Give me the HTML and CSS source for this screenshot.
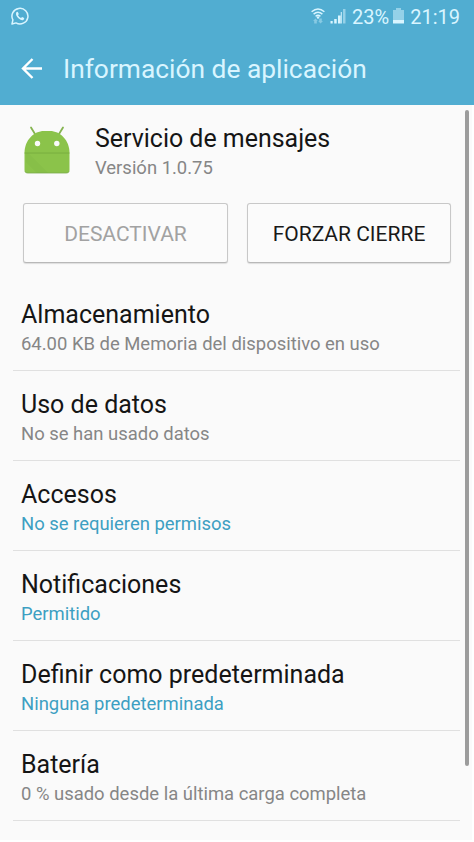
FILE: index.html
```html
<!DOCTYPE html>
<html lang="es">
<head>
<meta charset="utf-8">
<title>Información de aplicación</title>
<link rel="stylesheet" href="styles.css">
</head>
<body>
<div class="screen">
  <header class="header">
    <div class="status">
      <svg class="whatsapp" width="18" height="18" viewBox="0 0 18 18">
        <path d="M1 17L1.900 12.800A8 7.800 0 1 1 5 15.900Z" fill="none" stroke="currentColor" stroke-width="1.5" stroke-linejoin="round"/>
        <path d="M5.2 5.6Q6 4.5 6.8 4.9L7.8 7.1L7 8.3Q8 10.2 10 11L11.1 10L13.2 11Q13.4 12.3 12.2 13Q10.5 13.8 7.7 11.6Q4.2 8.6 5.2 5.6Z" fill="currentColor"/>
      </svg>
      <div class="indicators">
        <svg class="wifi" width="14" height="17" viewBox="0 0 14 17">
          <g fill="none" stroke="currentColor" stroke-width="1.4">
            <path d="M.6 3.700Q7-1.700 13.400 3.700"/>
            <path d="M2.600 6.100Q7 2.300 11.400 6.100"/>
            <path d="M4.600 8.400Q7 6.300 9.400 8.400"/>
          </g>
          <circle cx="7" cy="9.500" r="1.200" fill="currentColor"/>
          <path d="M4.500 10.500L6.800 13H5.800V15.500H3.200V13H2ZM9.500 15.500L7.200 13H8.200V10.500H10.800V13H12Z" fill="currentColor" opacity=".4"/>
        </svg>
        <svg class="signal" width="16" height="16" viewBox="0 0 16 16" fill="currentColor">
          <path d="M.5 13H2.700V15.500H.5ZM4.200 11H6.700V15.500H4.200ZM8 7.500H10.700V15.500H8Z"/>
          <path d="M10.700 4H12V15.500H10.700Z" opacity=".75"/>
          <path d="M13 1H15.500V15.500H13Z" opacity=".5"/>
        </svg>
        <span class="percent">23%</span>
        <svg class="battery" width="11" height="16" viewBox="0 0 11 16" fill="currentColor">
          <path d="M0 2H3V0H8V2H11V12H0Z" opacity=".5"/>
          <path d="M0 12H11V15.5H0Z"/>
        </svg>
        <span class="clock">21:19</span>
      </div>
    </div>
    <div class="toolbar">
      <svg class="back" width="22" height="21" viewBox="0 0 22 21" fill="none" stroke="currentColor" stroke-width="2.4">
        <path d="M11.5 1L2 10.5L11.5 20M2 10.5H21"/>
      </svg>
      <h1 class="heading">Información de aplicación</h1>
    </div>
  </header>
  <main class="content">
    <section class="app">
      <svg class="app-icon" width="46" height="48" viewBox="0 0 46 48">
        <path d="M7 1.500L11 8M39 1.500L35 8" stroke="#85b450" stroke-width="1.800" stroke-linecap="round"/>
        <path d="M.5 27C.5 14 10 5 20 5H26C36 5 45.500 14 45.500 27Z" fill="#8bc34a"/>
        <path d="M.5 27H45.500V44Q45.500 47 42.500 47H3.500Q.5 47 .5 44Z" fill="#8bc34a"/>
        <path d="M2 27H4L24 47H13L2 36Z" fill="#7db343" opacity=".25"/>
        <path d="M.5 27H45.500" stroke="#75a83d" stroke-width=".8"/>
        <path d="M1 45.500Q1.500 47 3.500 47H42.500Q44.500 47 45 45.500" fill="none" stroke="#78a94c" stroke-width=".8"/>
        <circle cx="13.500" cy="17.500" r="2.700" fill="#fafafa"/>
        <circle cx="32.800" cy="17.500" r="2.700" fill="#fafafa"/>
      </svg>
      <div>
        <h2 class="title app-name">Servicio de mensajes</h2>
        <p class="sub version">Versión 1.0.75</p>
      </div>
    </section>
    <div class="actions">
      <button class="button" disabled>DESACTIVAR</button>
      <button class="button">FORZAR CIERRE</button>
    </div>
    <section class="list">
      <div class="row"><h2 class="title">Almacenamiento</h2><p class="sub">64.00 KB de Memoria del dispositivo en uso</p></div>
      <div class="row"><h2 class="title">Uso de datos</h2><p class="sub">No se han usado datos</p></div>
      <div class="row"><h2 class="title">Accesos</h2><p class="sub link">No se requieren permisos</p></div>
      <div class="row"><h2 class="title">Notificaciones</h2><p class="sub link">Permitido</p></div>
      <div class="row"><h2 class="title">Definir como predeterminada</h2><p class="sub link">Ninguna predeterminada</p></div>
      <div class="row"><h2 class="title">Batería</h2><p class="sub">0 % usado desde la última carga completa</p></div>
    </section>
    <div class="scrollbar"></div>
  </main>
</div>
</body>
</html>
```
FILE: styles.css
```css
* { box-sizing: border-box; }
body { margin: 0; background: #fff; font-family: Roboto, "Liberation Sans", sans-serif; }
h1, h2, p { margin: 0; font-weight: 400; white-space: nowrap; }
svg { display: block; flex: none; }
.screen { height: 842px; overflow: hidden; }
.header { height: 105px; background: #51add1; color: #d9f5ff; }
.status { height: 33px; display: flex; justify-content: space-between; padding: 0 14px 0 11px; }
.whatsapp { margin-top: 7px; }
.indicators { display: flex; font-size: 20px; line-height: 34px; }
.wifi { margin-top: 8px; }
.signal { margin: 8px 6px 0 5px; }
.battery { margin: 8px 6px 0 4px; }
.toolbar { height: 72px; display: flex; align-items: center; padding-left: 21px; }
.back { color: #fff; margin-top: -2px; }
.heading { margin-left: 20px; font-size: 26.35px; line-height: 32px; }
.content { position: relative; height: 735px; width: 472px; background: #fafafa; }
.app { height: 98px; padding: 18px 0 0 24px; display: flex; }
.app-icon { margin-top: 3px; margin-right: 25px; }
.title { font-size: 25px; line-height: 32px; color: #151515; }
.app-name { font-size: 24.95px; }
.sub { font-size: 18.46px; line-height: 26px; color: #868686; }
.link { color: #3d9fc2; }
.actions { display: grid; grid-template-columns: 205px 204px; column-gap: 19px; padding-left: 23px; }
.button { height: 60px; padding: 1px 0 0; border: 1px solid #c8c8c8; border-bottom-color: #b8b8b8; border-radius: 3px; background: #fbfbfb; box-shadow: 0 1px 1px #ddd; font: 21px Roboto, "Liberation Sans", sans-serif; color: #191919; }
.button:disabled { color: #a2a2a2; }
.list { padding: 18px 12px 0 13px; }
.row { height: 90px; padding: 18px 0 0 8px; border-bottom: 1px solid #e0e0e0; }
.scrollbar { position: absolute; left: 465px; top: 5px; width: 4px; height: 656px; border-radius: 2px; background: #9c9c9c; }
```
